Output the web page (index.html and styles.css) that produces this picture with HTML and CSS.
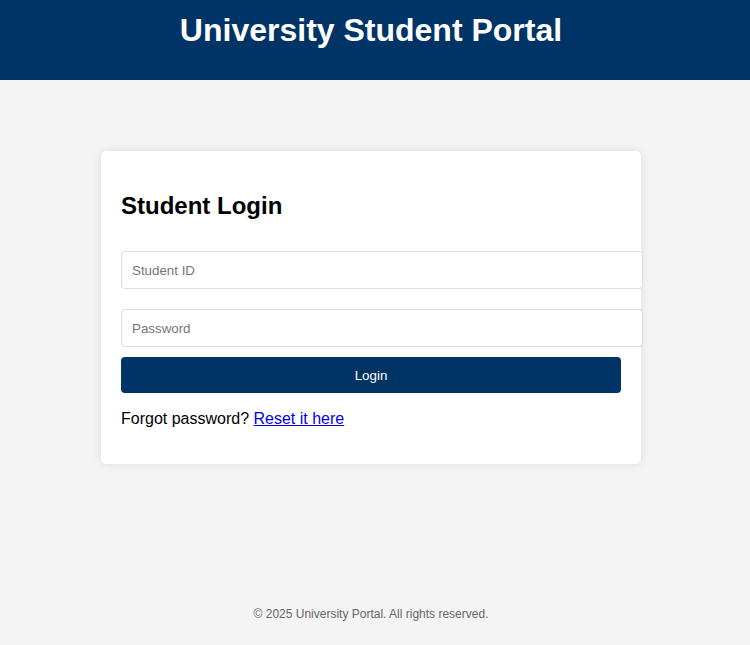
FILE: index.html
```html
<!DOCTYPE html>
<html lang="en">
<head>
<meta charset="utf-8">
<title>University Student Portal</title>
<link rel="stylesheet" href="styles.css">
</head>
<body>
<header class="site-header">
  <h1 class="site-title">University Student Portal</h1>
</header>
<main class="main">
  <section class="card">
    <h2 class="card-title">Student Login</h2>
    <form class="login-form">
      <input class="field field-id" type="text" placeholder="Student ID">
      <input class="field field-pw" type="password" placeholder="Password">
      <button class="login-btn" type="button">Login</button>
    </form>
    <p class="forgot">Forgot password? <a href="#" class="forgot-link">Reset it here</a></p>
  </section>
</main>
<footer class="site-footer">
  <p class="footer-text">© 2025 University Portal. All rights reserved.</p>
</footer>
</body>
</html>
```

FILE: styles.css
```css
html, body {
  margin: 0;
  padding: 0;
}
body {
  font-family: "Liberation Sans", Arial, sans-serif;
  background: #f4f4f4;
  min-height: 100vh;
  display: flex;
  flex-direction: column;
}
.site-header {
  background: #003366;
  color: #fff;
  text-align: center;
  padding: 12px 8px 31px 0;
}
.site-title {
  margin: 0;
  font-size: 32px;
  font-weight: bold;
}
.main {
  padding: 71px 8px 0 0;
}
.card {
  background: #fff;
  max-width: 500px;
  margin: 0 auto;
  padding: 20px;
  border-radius: 5px;
  box-shadow: 0 0 10px rgba(0, 0, 0, 0.1);
}
.card-title {
  font-size: 24px;
  font-weight: bold;
  margin: 21px 0 31px;
  color: #000;
}
.login-form {
  display: flex;
  flex-direction: column;
  align-items: flex-start;
  margin: 0;
}
.field {
  width: 100%;
  padding: 11px 10px 9px;
  border: 1px solid #ddd;
  border-radius: 4px;
  font-family: "Liberation Sans", Arial, sans-serif;
  font-size: 13.33px;
  line-height: 16px;
  margin: 0;
  background: #fff;
}
.field::placeholder {
  color: #757575;
}
.field-id {
  margin-bottom: 20px;
}
.field-pw {
  margin-bottom: 10px;
}
.login-btn {
  width: 100%;
  padding: 11px 10px 9px;
  border: none;
  border-radius: 4px;
  background: #003366;
  color: #fff;
  font-family: "Liberation Sans", Arial, sans-serif;
  font-size: 13.33px;
  line-height: 16px;
}
.forgot {
  margin: 17px 0 16px;
  font-size: 16px;
  color: #000;
}
.forgot-link {
  color: #0000ee;
  text-decoration: underline;
}
.site-footer {
  margin-top: auto;
  text-align: center;
  padding: 0 8px 24px 0;
}
.footer-text {
  margin: 0;
  font-size: 12px;
  color: #666;
}
```
